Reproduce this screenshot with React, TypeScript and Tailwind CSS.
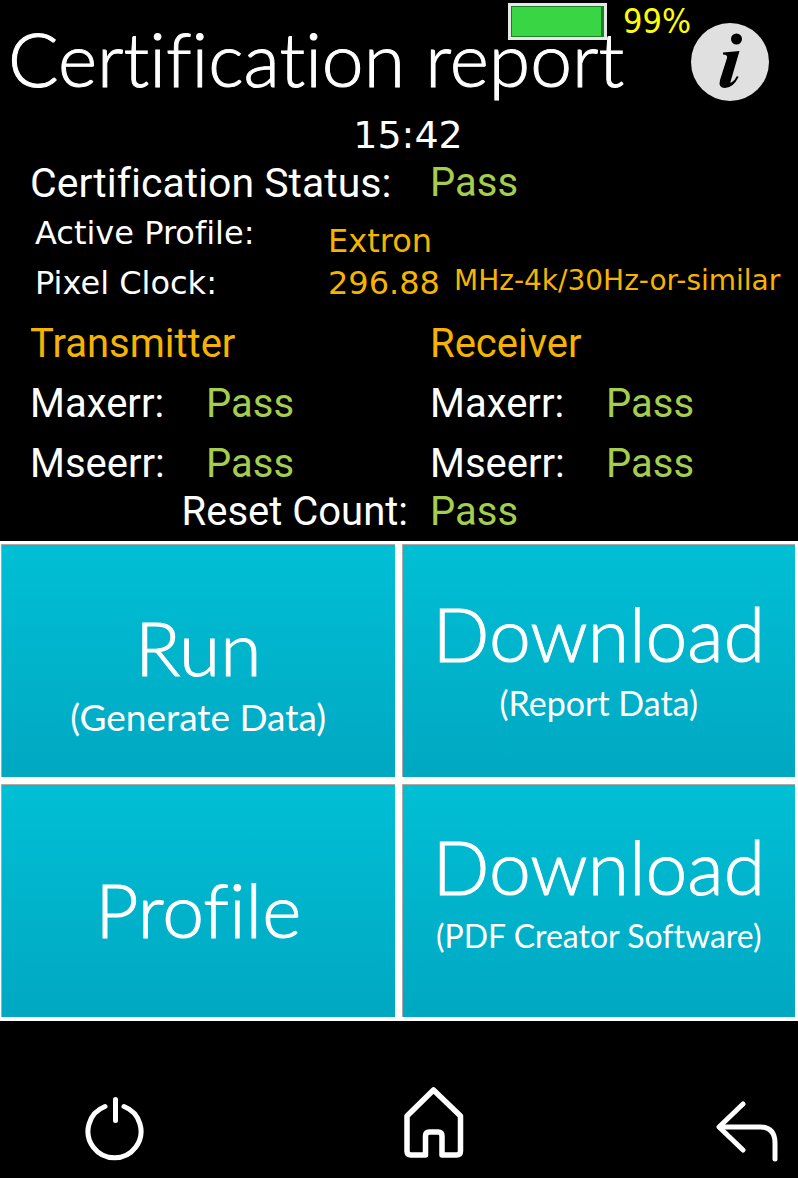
type ResultProps = {
  label: string;
  value: string;
};

type TileProps = {
  title: string;
  note?: string;
  noteClass?: string;
  className?: string;
};

function Result({ label, value }: ResultProps) {
  return (
    <div className="grid h-[60px] grid-cols-[176px_1fr] items-center">
      <dt>{label}</dt>
      <dd className="text-[#a5cd4e]">{value}</dd>
    </div>
  );
}

function ResultColumn({ title }: { title: string }) {
  return (
    <section>
      <h2 className="flex h-[60px] items-center text-[#f5b400]">{title}</h2>
      <dl>
        <Result label="Maxerr:" value="Pass" />
        <Result label="Mseerr:" value="Pass" />
      </dl>
    </section>
  );
}

function Tile({ title, note, noteClass = "", className = "" }: TileProps) {
  return (
    <button
      type="button"
      className={`flex h-[233px] flex-col items-center border-t border-l border-[#b5a5a5] bg-gradient-to-b from-[#00bfd5] to-[#00a8c2] font-['Lato',sans-serif] whitespace-nowrap text-white ${className}`}
    >
      <span className="text-[75px] leading-[80px] font-light [-webkit-text-stroke:1px_white]">{title}</span>
      {note && <span className={`leading-[60px] ${noteClass}`}>{note}</span>}
    </button>
  );
}

function PowerIcon() {
  return (
    <svg viewBox="0 0 66 66" className="h-[66px] w-[66px]" fill="none" stroke="currentColor" strokeWidth="5" strokeLinecap="round">
      <path d="M20 10.5A26.5 26.5 0 1 0 39 10.5" />
      <path d="M30.500 3.500V24.500" />
    </svg>
  );
}

function HomeIcon() {
  return (
    <svg viewBox="0 0 60 75" className="h-[75px] w-[60px]" fill="none" stroke="currentColor" strokeWidth="5.5" strokeLinejoin="round">
      <path d="M29.500 3L3 29V64Q3 68 7 68H21.500V49Q21.500 45 25.500 45H34Q38 45 38 49V68H52.500Q56.500 68 56.500 64V29Z" />
    </svg>
  );
}

function BackIcon() {
  return (
    <svg viewBox="0 0 62 62" className="h-[62px] w-[62px]" fill="none" stroke="currentColor" strokeWidth="5" strokeLinecap="round" strokeLinejoin="round">
      <path d="M27 4L3 27L27 50" />
      <path d="M4 27H45Q59 28 59 43V59" />
    </svg>
  );
}

export default function App() {
  return (
    <div className="min-h-screen bg-black font-['Roboto',sans-serif] text-[40px] leading-[48px] text-white [font-variant-ligatures:none]">
      <header className="relative flex h-[111px] items-center justify-between pr-[29px] pl-2">
        <h1 className="pt-1 font-['Lato',sans-serif] text-[75px] leading-[72px] font-light whitespace-nowrap [-webkit-text-stroke:1px_white]">
          Certification report
        </h1>
        <div className="absolute top-0 left-[508px] flex items-center gap-4">
          <div
            role="img"
            aria-label="Battery level"
            className="h-[37px] w-[99px] border-[3px] border-[#e8e8e8] bg-[#1d7d28] p-px"
          >
            <div className="h-full w-[98%] bg-[#38d545]" />
          </div>
          <span className="font-['DejaVu_Sans_Condensed','DejaVu_Sans',sans-serif] text-[34px] leading-[42px] text-[#ffff00]">
            99%
          </span>
        </div>
        <button
          type="button"
          aria-label="Information"
          className="mt-3 flex size-[78px] shrink-0 items-center justify-center rounded-full bg-[#e0e0e0] text-black"
        >
          <svg viewBox="0 0 78 78" className="size-full" fill="currentColor">
            <circle cx="45.500" cy="16" r="5.5" />
            <path d="M32 29.500L48.500 28L40 57Q38.500 61 41 59Q44 57 46 53L47.500 54Q42 65 34 65Q27 65 29 57L36 35Q37 31.500 32 31.500Z" />
          </svg>
        </button>
      </header>

      <main>
        <p className="pl-[18px] text-center font-['DejaVu_Sans',sans-serif] text-[38px] leading-[48px]">
          15:42
        </p>

        <dl className="pb-[7px] pl-[30px]">
          <div className="grid grid-cols-[400px_1fr] pb-1">
            <dt className="text-[41px]">Certification Status:</dt>
            <dd className="text-[#a5cd4e]">Pass</dd>
          </div>
          <div className="grid h-[48px] grid-cols-[293px_1fr] pl-[5px] font-['DejaVu_Sans',sans-serif] text-[32px] leading-[44px]">
            <dt>Active Profile:</dt>
            <dd className="pt-2 text-[#f5b400]">Extron</dd>
          </div>
          <div className="grid h-[48px] grid-cols-[293px_1fr] items-center pl-[5px] font-['DejaVu_Sans',sans-serif] text-[32px]">
            <dt>Pixel Clock:</dt>
            <dd className="flex items-center gap-[14px] whitespace-nowrap text-[#f5b400]">
              296.88
              <span className="pb-1 text-[28px] leading-[44px]">MHz-4k/30Hz-or-similar</span>
            </dd>
          </div>
        </dl>

        <div className="grid grid-cols-[400px_1fr] pl-[30px]">
          <ResultColumn title="Transmitter" />
          <ResultColumn title="Receiver" />
        </div>

        <dl className="grid grid-cols-[400px_1fr] pb-[11px] pl-[30px] leading-[36px]">
          <dt className="pr-[22px] text-right">Reset Count:</dt>
          <dd className="text-[#a5cd4e]">Pass</dd>
        </dl>

        <div className="grid grid-cols-2 gap-[7px] bg-white pt-[3px] pr-[3px] pb-[4px] pl-px">
          <Tile title="Run" note="(Generate Data)" noteClass="text-[37px]" className="pt-[62px]" />
          <Tile title="Download" note="(Report Data)" noteClass="text-[34px]" className="pt-[48px]" />
          <Tile title="Profile" className="pt-[84px]" />
          <Tile title="Download" note="(PDF Creator Software)" noteClass="text-[32px]" className="pt-[41px]" />
        </div>
      </main>

      <nav className="flex items-end justify-between pt-[66px] pr-5 pb-[15px] pl-[85px]">
        <button type="button" aria-label="Power">
          <PowerIcon />
        </button>
        <button type="button" aria-label="Home">
          <HomeIcon />
        </button>
        <button type="button" aria-label="Back">
          <BackIcon />
        </button>
      </nav>
    </div>
  );
}
